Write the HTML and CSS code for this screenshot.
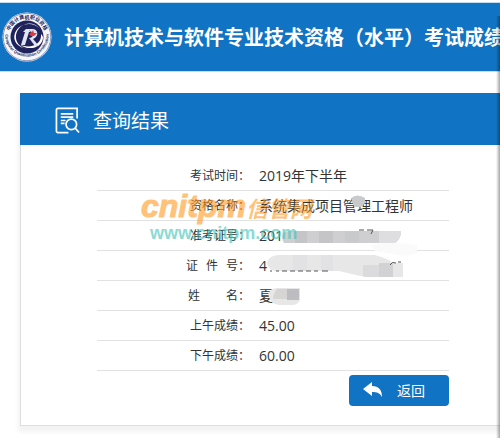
FILE: index.html
```html
<!DOCTYPE html>
<html lang="zh-CN">
<head>
    <meta charset="UTF-8"/>
    <meta name="viewport" content="width=device-width, initial-scale=1.0"/>
    <title>查询结果</title>
    <link rel="stylesheet" href="styles.css">
</head>
<body>
<header class="header">
    <svg class="logo" viewBox="0 0 50 50" aria-hidden="true">
        <defs>
            <path id="arcTop" d="M6.500 25a18.500 18.500 0 0 1 37 0"/>
            <path id="arcBottom" d="M3.500 20a21.700 21.700 0 1 0 43 0"/>
        </defs>
        <circle cx="25" cy="25" r="24.500" fill="#f4f6fa"/>
        <circle cx="25" cy="25" r="23.800" fill="none" stroke="#8d94b4" stroke-width="1"/>
        <circle cx="25" cy="25" r="16.500" fill="#20225c"/>
        <text class="logoText"><textPath href="#arcTop" startOffset="50%">中国计算机职业资格</textPath></text>
        <text class="logoText small"><textPath href="#arcBottom" startOffset="50%">Computer Qualification Certification</textPath></text>
        <path d="M38 17C31 9 17 11 13 21c-3 8 3 15 13 16-8-1-13-7-12-14 2-11 16-16 24-6z" fill="#fff"/>
        <path d="M39 22c1 10-9 15-21 11 9 6 22 3 23-7 0-2-1-3-2-4z" fill="#fff"/>
        <path d="M24 17h6c7 0 7 8 1 10l6 7h-4l-6-8c5 0 6-6 2-6h-2l-4 13h-4l4-13h-2z" fill="#dfe5f1"/>
        <path d="M27 18l3 2 1-2 1 3h3l-3 3h-3l-2-2 2-1z" fill="#e03a3c"/>
    </svg>
    <h1>计算机技术与软件专业技术资格（水平）考试成绩</h1>
</header>

<main class="panel">
    <div class="panelTitle">
        <svg class="searchIcon" viewBox="0 0 26 28" aria-hidden="true">
            <path d="M23 12V1.500H3A1.500 1.500 0 0 0 1.500 3v22A1.500 1.500 0 0 0 3 26.500h11"/>
            <path d="M6 7h13M6 10.500h13M6 14h5M6 17h4"/>
            <circle cx="17" cy="18" r="5.500"/>
            <path d="M21 22l4 4.500"/>
        </svg>
        <h2>查询结果</h2>
    </div>
    <div class="result">
        <table>
            <tbody>
            <tr>
                <th scope="row">考试时间：</th>
                <td>2019年下半年</td>
            </tr>
            <tr>
                <th scope="row">资格名称：</th>
                <td>系统集成项目管理工程师
                    <svg class="mask" viewBox="0 0 200 30" aria-hidden="true">
                        <path d="M92 7q6-5 14 0v5l-4 4h-6l-3-5z" fill="#c9cacc"/>
                    </svg>
                </td>
            </tr>
            <tr>
                <th scope="row">准考证号：</th>
                <td>201
                    <svg class="mask" viewBox="0 0 200 30" aria-hidden="true">
                        <path d="M24 12q3-2 8-2h110q0 8-6 12H25q-3-5-1-10z" fill="#cfcfd1"/>
                        <path d="M36 10h12v12H36zM60 10h14v12H60z" fill="#c5c5c8"/>
                        <path d="M86 10h14v12H86z" fill="#c9cacc"/>
                        <path d="M120 10h22q0 8-6 12h-16z" fill="#dedee0"/>
                        <path d="M100 9h5M108 9h6l-2 4" fill="none" stroke="#555" stroke-width="1"/>
                    </svg>
                </td>
            </tr>
            <tr>
                <th scope="row">证&ensp;&thinsp;件&ensp;&thinsp;号：</th>
                <td>4
                    <svg class="mask" viewBox="0 0 200 30" aria-hidden="true">
                        <path d="M112-6q20-4 46 0v8q-12 4-18 2l-24-4z" fill="#fafafa"/>
                        <path d="M8 11Q11 4 20 4h96q14 4 18 8h10v14h-38q-14-3-26-6H16q-8-2-8-9z" fill="#e7e7e8"/>
                        <path d="M34 4h14v16H34zM62 4h12v16H62z" fill="#e2e2e4"/>
                        <path d="M104 14h16v12h-14l-2-1z" fill="#dbdbdd"/>
                        <path d="M120 12h14v14h-14z" fill="#d2d2d5"/>
                        <path d="M11 20h2M17 20h3M23 20h5M31 20h5M39 20h5M47 20h5M55 20h4M63 20h6M131 14q2-4 6-2M139 11h3" fill="none" stroke="#555" stroke-width="1"/>
                    </svg>
                </td>
            </tr>
            <tr>
                <th scope="row">姓&emsp;&emsp;&thinsp;名：</th>
                <td>夏
                    <svg class="mask" viewBox="0 0 200 30" aria-hidden="true">
                        <path d="M9 13q3-6 9-6h23v12q-2 5-8 5H20q-9-1-11-11z" fill="#e7e7e8"/>
                        <path d="M18 8h10v10H14q1-7 4-10z" fill="#d6d5d4"/>
                        <path d="M28 8h12v11H28z" fill="#bcbcc1"/>
                    </svg>
                </td>
            </tr>
            <tr>
                <th scope="row">上午成绩：</th>
                <td>45.00</td>
            </tr>
            <tr>
                <th scope="row">下午成绩：</th>
                <td>60.00</td>
            </tr>
            </tbody>
        </table>
        <button type="button" class="backBtn">
            <svg viewBox="0 0 20 16" aria-hidden="true">
                <path d="M9 0v4c7 0 10 4 10 11-2-4-5-5-10-5v4L0 7z" fill="#fff"/>
            </svg>
            返回
        </button>
        <div class="watermark">
            <p class="brand">cnitpm<span>信管网</span></p>
            <p class="site">www.cnitpm.com</p>
        </div>
    </div>
</main>
</body>
</html>
```

FILE: styles.css
```css
* {
    margin: 0;
    padding: 0;
    box-sizing: border-box;
}

body {
    min-height: 100vh;
    padding-top: 3px;
    position: relative;
    overflow-x: hidden;
    background: #fff;
    color: #333;
    font-family: "Open Sans", "Noto Sans CJK SC", sans-serif;
}

/* 页面右侧阴影 */
body::after {
    content: "";
    position: absolute;
    top: 16px;
    right: 0;
    bottom: 0;
    width: 4px;
    background: linear-gradient(to right, rgba(0, 0, 0, 0), rgba(0, 0, 0, .35));
}

.header {
    height: 68px;
    padding-left: 2px;
    display: flex;
    align-items: center;
    gap: 12px;
    overflow: hidden;
    background: #1173c3;
    box-shadow: 0 0 0 1px #c3dcf0;
}

.header .logo {
    width: 50px;
    height: 50px;
    flex-shrink: 0;
}

.logoText {
    fill: #20225c;
    font-size: 5px;
    font-weight: bold;
    text-anchor: middle;
}

.logoText.small {
    font-family: "Liberation Sans", sans-serif;
    font-size: 4px;
}

.header h1 {
    padding-top: 2px;
    color: #fff;
    font-size: 20px;
    line-height: 30px;
    white-space: nowrap;
}

.panel {
    margin: 22px 0 13px 20px;
    border: solid #ddd;
    border-width: 0 0 1px 1px;
    box-shadow: 0 4px 4px 2px #f3f3f3;
}

.panelTitle {
    height: 52px;
    margin-left: -1px;
    padding: 2px 0 0 35px;
    display: flex;
    align-items: center;
    gap: 13px;
    background: #1173c3;
    color: #fff;
}

.panelTitle h2 {
    padding-top: 2px;
    font-size: 19px;
    font-weight: normal;
    line-height: 28px;
}

.searchIcon {
    width: 25px;
    height: 27px;
    fill: none;
    stroke: #fff;
    stroke-width: 1.8;
}

.result {
    padding: 15px 51px 19px 76px;
    position: relative;
    display: flex;
    flex-direction: column;
    align-items: flex-end;
    gap: 4px;
}

.result table {
    width: 100%;
    border-collapse: collapse;
}

.result th,
.result td {
    height: 30px;
    padding-top: 2px;
    border-bottom: 1px solid #e2e2e2;
    line-height: 20px;
    white-space: nowrap;
}

.result th {
    width: 153px;
    font-size: 12px;
    font-weight: normal;
    text-align: right;
}

.result td {
    padding-left: 9px;
    position: relative;
    font-size: 14px;
}

/* 遮挡个人信息 */
.mask {
    width: 200px;
    height: 30px;
    position: absolute;
    top: 0;
    left: 9px;
    overflow: visible;
}

.backBtn {
    width: 100px;
    height: 31px;
    padding-right: 10px;
    display: flex;
    align-items: center;
    justify-content: center;
    gap: 14px;
    border: 0;
    border-radius: 4px;
    background: #1173c3;
    color: #fff;
    font-family: inherit;
    font-size: 14px;
    cursor: pointer;
}

.backBtn svg {
    width: 20px;
    height: 16px;
}

/* 水印 */
.watermark {
    position: absolute;
    top: 46px;
    left: 120px;
    font-family: "Liberation Sans", "Noto Sans CJK SC", sans-serif;
    font-weight: bold;
    white-space: nowrap;
    opacity: .6;
    pointer-events: none;
}

.brand {
    color: #ff9a1f;
    font-size: 32px;
    font-style: italic;
    line-height: 30px;
    -webkit-text-stroke: 1px #ff9a1f;
}

.brand span {
    font-size: 22px;
    -webkit-text-stroke: 0;
}

.site {
    padding-left: 9px;
    color: #3cc4b8;
    font-size: 18px;
    line-height: 16px;
}
```
